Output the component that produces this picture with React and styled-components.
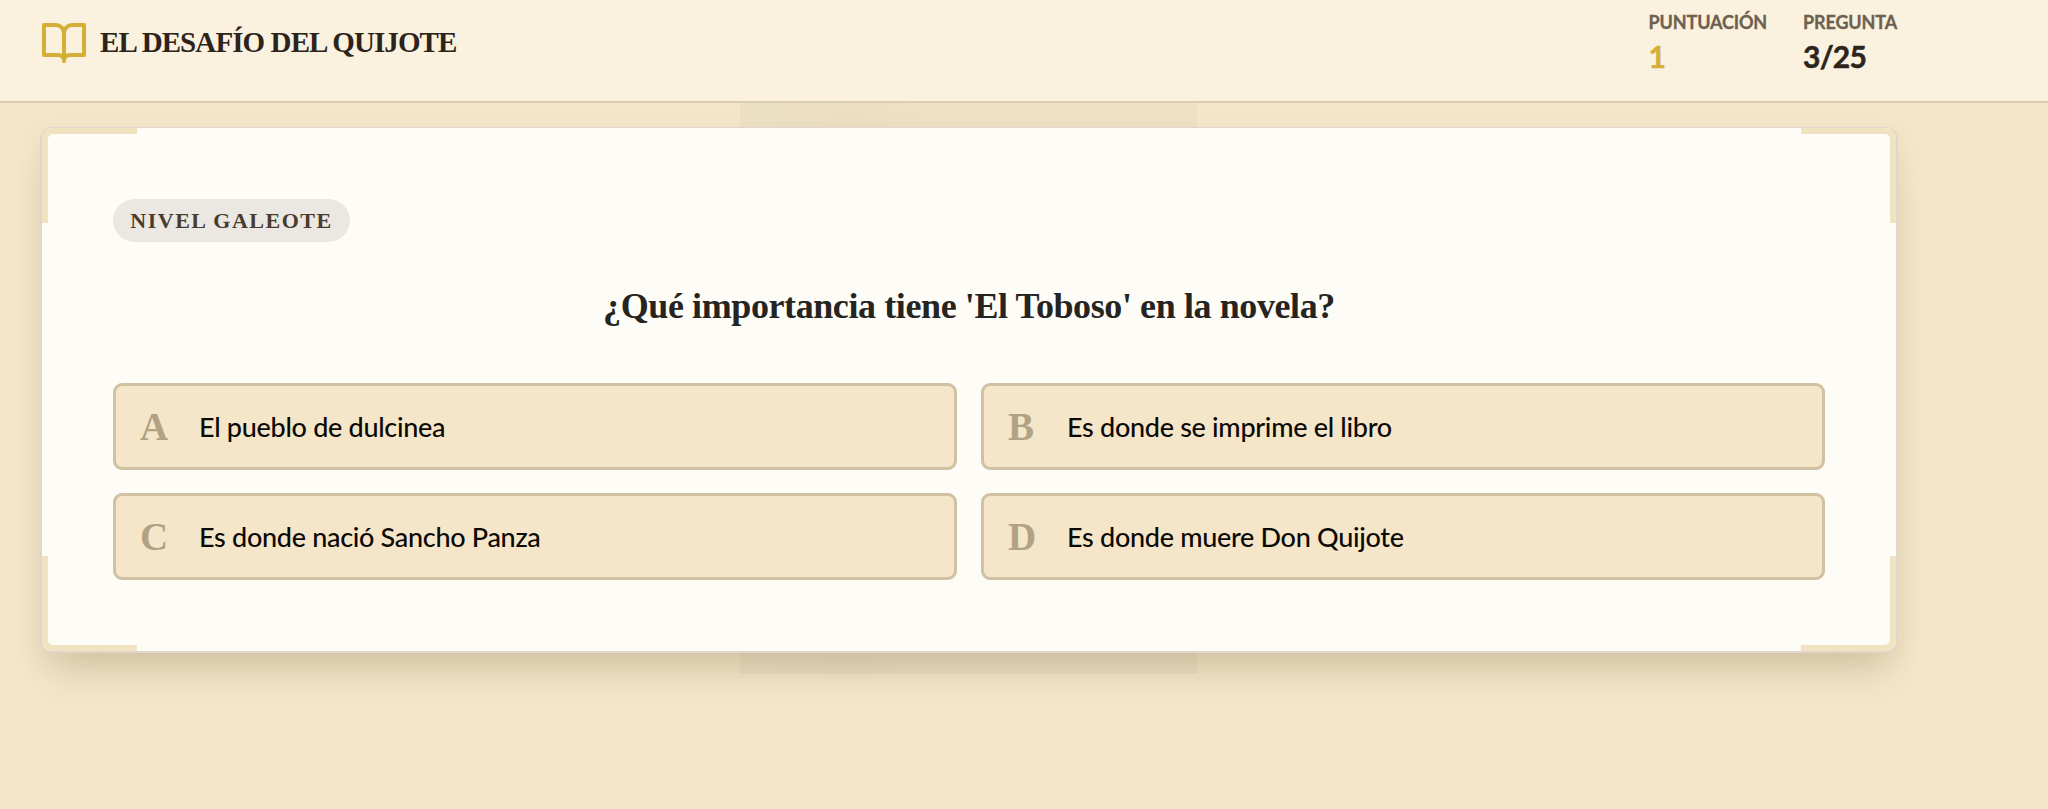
import React from 'react';
import styled, { createGlobalStyle } from 'styled-components';

const GlobalStyle = createGlobalStyle`
  * {
    box-sizing: border-box;
  }

  body {
    margin: 0;
    background: #f5e6ca;
    font-family: Lato, sans-serif;
    color: #2c241b;
    overflow: hidden;
  }
`;

const display = '"Liberation Serif", serif';

const Page = styled.div`
  position: relative;
  height: 809px;
  overflow: hidden;
`;

const Watermark = styled.div`
  position: absolute;
  left: 740px;
  top: 103px;
  width: 457px;
  height: 571px;
  background: linear-gradient(90deg, #ede1c5, #ecdfc3 25%, #eee1c5 40%, #eee1c5);
`;

const Header = styled.header`
  position: relative;
  display: flex;
  justify-content: space-between;
  height: 103px;
  padding: 0 151px 0 40px;
  background: #faf1df;
  border-bottom: 2px solid #d9ceb5;
`;

const Brand = styled.div`
  display: flex;
  align-items: center;
  gap: 12px;
  height: 48px;
  margin-top: 19px;
`;

const BookIcon = styled.svg`
  width: 48px;
  height: 48px;
  fill: none;
  stroke: #d4af37;
  stroke-width: 2;
  stroke-linecap: round;
  stroke-linejoin: round;
`;

const Title = styled.h1`
  margin: -3px 0 0;
  font: bold 29px/40px ${display};
  letter-spacing: -0.9px;
  white-space: nowrap;
`;

const Stats = styled.div`
  display: flex;
  gap: 36px;
  padding-top: 9px;
`;

const StatLabel = styled.div`
  font-size: 18px;
  font-weight: 700;
  line-height: 27px;
  letter-spacing: -0.15px;
  color: #6e604e;
  -webkit-text-stroke: 0.3px;
`;

const StatValue = styled.div`
  font-size: 30px;
  font-weight: 700;
  line-height: 40px;
  letter-spacing: -0.8px;
  color: ${(props) => (props.$gold ? '#d4af37' : '#2c241b')};
  -webkit-text-stroke: 0.5px;
`;

const Card = styled.main`
  position: relative;
  width: 1858px;
  height: 526px;
  margin: 24px 0 0 40px;
  padding: 71px 71px 70px;
  background: #fefcf7;
  border: 2px solid #e0d6cb;
  border-top-width: 1px;
  border-radius: 12px;
  box-shadow: 0 32px 38px -14px rgba(75, 60, 20, 0.16), 0 8px 26px rgba(110, 90, 30, 0.09);
`;

const Corner = styled.span`
  position: absolute;
  ${(props) => props.$v}: 0;
  ${(props) => props.$h}: 0;
  width: 95px;
  height: 95px;
  border: 0 solid #f0e4c0;
  border-${(props) => props.$v}-width: 6px;
  border-${(props) => props.$h}-width: 6px;
  border-${(props) => props.$v}-${(props) => props.$h}-radius: 11px;
`;

const Badge = styled.div`
  display: flex;
  align-items: center;
  justify-content: center;
  width: 237px;
  height: 43px;
  border-radius: 22px;
  background: #ebe8e3;
  color: #4a3b2c;
  font: bold 22px/43px ${display};
  letter-spacing: 1.5px;
  white-space: nowrap;
`;

const Question = styled.h2`
  margin: 39px 0 52px;
  font: bold 36px/50px ${display};
  letter-spacing: -0.4px;
  text-align: center;
  color: #262421;
`;

const Options = styled.div`
  display: grid;
  grid-template-columns: 1fr 1fr;
  gap: 23.5px 24px;
`;

const Option = styled.button`
  display: flex;
  align-items: center;
  height: 86.5px;
  padding: 1px 21px 0 24px;
  border: 3px solid #d0c1a2;
  border-radius: 9px;
  background: #f5e6ca;
  color: #0c0a07;
  font: 500 27px/36px Lato, sans-serif;
  letter-spacing: -0.3px;
  text-align: left;
`;

const Letter = styled.span`
  width: 59px;
  color: #b1a284;
  font: bold 39px/44px ${display};
`;

const options = [
  ['A', 'El pueblo de dulcinea'],
  ['B', 'Es donde se imprime el libro'],
  ['C', 'Es donde nació Sancho Panza'],
  ['D', 'Es donde muere Don Quijote']
];

const App = () => (
  <>
    <GlobalStyle />
    <Page>
      <Watermark />
      <Header>
        <Brand>
          <BookIcon viewBox="0 0 24 24">
            <path d="M2 3h6a4 4 0 0 1 4 4v14a3 3 0 0 0-3-3H2z" />
            <path d="M22 3h-6a4 4 0 0 0-4 4v14a3 3 0 0 1 3-3h7z" />
          </BookIcon>
          <Title>EL DESAFÍO DEL QUIJOTE</Title>
        </Brand>
        <Stats>
          <div>
            <StatLabel>PUNTUACIÓN</StatLabel>
            <StatValue $gold>1</StatValue>
          </div>
          <div>
            <StatLabel>PREGUNTA</StatLabel>
            <StatValue>3/25</StatValue>
          </div>
        </Stats>
      </Header>
      <Card>
        <Corner $v="top" $h="left" />
        <Corner $v="top" $h="right" />
        <Corner $v="bottom" $h="left" />
        <Corner $v="bottom" $h="right" />
        <Badge>NIVEL GALEOTE</Badge>
        <Question>¿Qué importancia tiene 'El Toboso' en la novela?</Question>
        <Options>
          {options.map(([letter, text]) => (
            <Option key={letter}>
              <Letter>{letter}</Letter>
              <span>{text}</span>
            </Option>
          ))}
        </Options>
      </Card>
    </Page>
  </>
);

export default App;
